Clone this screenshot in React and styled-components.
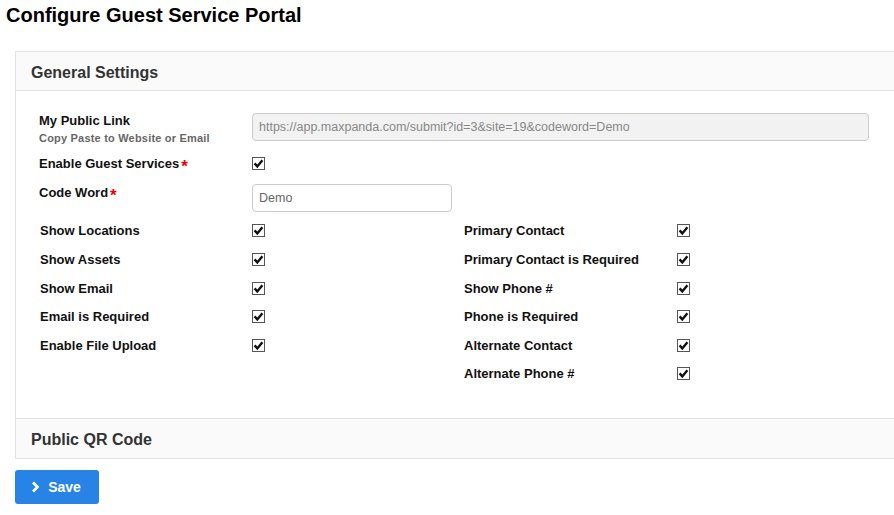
import React from "react";
import styled, { createGlobalStyle } from "styled-components";

const Global = createGlobalStyle`
  html, body { margin: 0; padding: 0; background: #fff; overflow: hidden; }
  body { font-family: "Liberation Sans", Arial, sans-serif; color: #111; }
`;

const Page = styled.div`
  padding: 4px 0 0 0;
  width: 894px;
  height: 515px;
  box-sizing: border-box;
  overflow: hidden;
`;

const Title = styled.h1`
  margin: 0 0 0 6px;
  font-size: 20px;
  line-height: 22px;
  font-weight: bold;
  color: #000;
`;

const Panel = styled.section`
  margin: 25px 0 0 15px;
  width: 920px;
  border: 1px solid #e3e3e6;
  border-right: none;
  background: #fff;
`;

const PanelHeader = styled.div`
  height: ${(p) => (p.$last ? 40 : 39)}px;
  box-sizing: border-box;
  display: flex;
  align-items: center;
  padding: 3px 0 0 15px;
  background: #fafafa;
  font-size: 16px;
  font-weight: bold;
  color: #333;
  border-top: ${(p) => (p.$divided ? "1px solid #e3e3e6" : "none")};
  border-bottom: ${(p) => (p.$last ? "none" : "1px solid #e3e3e6")};
`;

const PanelBody = styled.div`
  padding: 22px 0 29.7px 23px;
`;

const Row = styled.div`
  display: flex;
  align-items: ${(p) => p.$align || "flex-start"};
  margin-top: ${(p) => p.$mt || 0}px;
  min-height: ${(p) => p.$h || 0}px;
`;

const LabelCol = styled.div`
  width: 213px;
  flex: none;
`;

const Label = styled.div`
  font-size: 13px;
  line-height: 15px;
  font-weight: bold;
  color: #111;
  padding-left: ${(p) => (p.$indent ? 1 : 0)}px;
  padding-top: ${(p) => p.$pt || 0}px;
`;

const SubLabel = styled.div`
  font-size: 11px;
  line-height: 14px;
  margin-top: 3px;
  color: #666;
  font-weight: bold;
  letter-spacing: 0.2px;
`;

const Star = styled.span`
  color: #e00;
  font-size: 17px;
  line-height: 10px;
  margin-left: 2px;
  position: relative;
  top: 4px;
`;

const TextInput = styled.input`
  box-sizing: border-box;
  height: 28px;
  width: ${(p) => p.$w}px;
  border: 1px solid #ccc;
  border-radius: 4px;
  padding: 0 6px;
  font-family: "Liberation Sans", Arial, sans-serif;
  font-size: 12.5px;
  color: ${(p) => (p.disabled ? "#888" : "#666")};
  background: ${(p) => (p.disabled ? "#f2f2f2" : "#fff")};
  outline: none;
`;

const Box = styled.span`
  display: inline-flex;
  align-items: center;
  justify-content: center;
  width: 13px;
  height: 13px;
  box-sizing: border-box;
  border: 1px solid #555;
  background: #fff;
`;

const Grid = styled.div`
  display: grid;
  grid-template-columns: 425px 1fr;
  grid-auto-rows: 28.6px;
  margin-top: 4.7px;
`;

const Cell = styled.div`
  display: flex;
  align-items: center;
  grid-column: ${(p) => p.$col};
  grid-row: ${(p) => p.$row};
`;

const SaveButton = styled.button`
  margin: 11px 0 0 15px;
  height: 34px;
  width: 84px;
  border: none;
  border-radius: 3px;
  background: #2784e6;
  color: #fff;
  font-family: "Liberation Sans", Arial, sans-serif;
  font-size: 14px;
  font-weight: bold;
  display: flex;
  align-items: center;
  justify-content: center;
  gap: 8px;
  padding: 0 2px 0 0;
  cursor: pointer;
`;

const Check = () => (
  <Box>
    <svg width="11" height="11" viewBox="0 0 11 11">
      <path d="M1.6 5.4 L4.3 8.4 L9.4 2.2" fill="none" stroke="#111" strokeWidth="2.4" />
    </svg>
  </Box>
);

const left = ["Show Locations", "Show Assets", "Show Email", "Email is Required", "Enable File Upload"];
const right = [
  "Primary Contact",
  "Primary Contact is Required",
  "Show Phone #",
  "Phone is Required",
  "Alternate Contact",
  "Alternate Phone #",
];

export default function App() {
  return (
    <Page>
      <Global />
      <Title>Configure Guest Service Portal</Title>
      <Panel>
        <PanelHeader>General Settings</PanelHeader>
        <PanelBody>
          <Row>
            <LabelCol>
              <Label>My Public Link</Label>
              <SubLabel>Copy Paste to Website or Email</SubLabel>
            </LabelCol>
            <TextInput
              disabled
              $w={617}
              value="https://app.maxpanda.com/submit?id=3&site=19&codeword=Demo"
              readOnly
            />
          </Row>
          <Row $align="center" $mt={8} $h={20}>
            <LabelCol>
              <Label>
                Enable Guest Services<Star>*</Star>
              </Label>
            </LabelCol>
            <Check />
          </Row>
          <Row $mt={11}>
            <LabelCol>
              <Label $pt={1}>
                Code Word<Star>*</Star>
              </Label>
            </LabelCol>
            <TextInput $w={200} defaultValue="Demo" />
          </Row>
          <Grid>
            {left.map((t, i) => (
              <Cell key={t} $col={1} $row={i + 1}>
                <LabelCol>
                  <Label $indent>{t}</Label>
                </LabelCol>
                <Check />
              </Cell>
            ))}
            {right.map((t, i) => (
              <Cell key={t} $col={2} $row={i + 1}>
                <LabelCol>
                  <Label>{t}</Label>
                </LabelCol>
                <Check />
              </Cell>
            ))}
          </Grid>
        </PanelBody>
        <PanelHeader $divided $last>
          Public QR Code
        </PanelHeader>
      </Panel>
      <SaveButton>
        <svg width="9" height="12" viewBox="0 0 9 12">
          <path d="M2 1.5 L6.5 6 L2 10.5" fill="none" stroke="#fff" strokeWidth="2.6" />
        </svg>
        Save
      </SaveButton>
    </Page>
  );
}
